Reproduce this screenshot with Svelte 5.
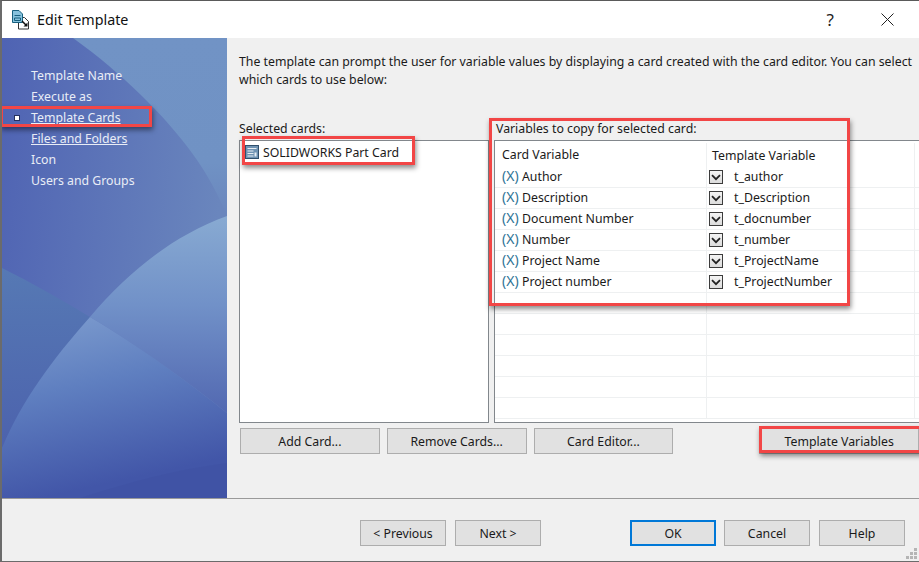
<script lang="ts">
  const nav = ['Template Name', 'Execute as', 'Template Cards', 'Files and Folders', 'Icon', 'Users and Groups'];
  const active = 'Template Cards';
  const linked = ['Template Cards', 'Files and Folders'];

  const vars = [
    { card: 'Author', tpl: 't_author' },
    { card: 'Description', tpl: 't_Description' },
    { card: 'Document Number', tpl: 't_docnumber' },
    { card: 'Number', tpl: 't_number' },
    { card: 'Project Name', tpl: 't_ProjectName' },
    { card: 'Project number', tpl: 't_ProjectNumber' }
  ];
  // empty rows under the list
  const blanks = [0, 1, 2, 3, 4, 5];
</script>

<div class="window">
  <header class="titlebar">
    <svg class="app-icon" width="20" height="20" viewBox="0 0 20 20">
      <path d="M6.500 7.500h6l4 4v7.500h-10z" fill="#fff" stroke="#333" />
      <path d="M.5 .5h6.500l3.500 3.500v8.500h-10z" fill="#86c1dc" stroke="#17607f" />
      <path d="M2.500 5.500h6M2.500 8h6v2.500h-6z" fill="none" stroke="#17607f" />
      <path d="M10 11l4.500 4.500" stroke="#111" stroke-width="1.500" />
      <path d="M15.500 12.500v4h-4z" fill="#111" />
    </svg>
    <span class="title">Edit Template</span>
    <span class="help-q">?</span>
    <svg class="close" width="13" height="13" viewBox="0 0 13 13">
      <path d="M.5.5l12 12M12.500.5l-12 12" stroke="#222" fill="none" />
    </svg>
  </header>

  <div class="body">
    <aside class="sidebar">
      <svg class="art" width="225" height="460" viewBox="0 0 225 460">
        <defs>
          <linearGradient id="base" x1="0" y1="0" x2="1" y2="0.2">
            <stop offset="0" stop-color="#4f63b3" />
            <stop offset="1" stop-color="#6a86bd" />
          </linearGradient>
          <linearGradient id="corner" x1="0" y1="0" x2="0" y2="1">
            <stop offset="0" stop-color="#7193c5" />
            <stop offset="0.7" stop-color="#7092c4" />
            <stop offset="1" stop-color="#6a86bd" />
          </linearGradient>
          <linearGradient id="upper" x1="0" y1="178" x2="0" y2="375" gradientUnits="userSpaceOnUse">
            <stop offset="0" stop-color="#88aad2" />
            <stop offset="0.45" stop-color="#7191c8" />
            <stop offset="1" stop-color="#5268b1" />
          </linearGradient>
          <linearGradient id="lower" x1="0" y1="279" x2="40" y2="460" gradientUnits="userSpaceOnUse">
            <stop offset="0" stop-color="#7f9ecf" />
            <stop offset="0.45" stop-color="#5f7fc0" />
            <stop offset="1" stop-color="#4256a8" />
          </linearGradient>
          <linearGradient id="band" x1="0" y1="230" x2="0" y2="410" gradientUnits="userSpaceOnUse">
            <stop offset="0" stop-color="#5679b4" />
            <stop offset="1" stop-color="#4c62ad" />
          </linearGradient>
        </defs>
        <rect width="225" height="460" fill="url(#base)" />
        <path d="M71 0C120 35 165 80 190 115C205 135 218 160 225 178V0z" fill="url(#corner)" />
        <path d="M0 230C30 245 60 262 88 279L0 410z" fill="url(#band)" />
        <path d="M88 279C135 307 185 343 225 375V178C170 198 125 235 88 279z" fill="url(#upper)" />
        <path d="M0 410C20 362 50 322 88 279C135 307 185 343 225 375V460H0z" fill="url(#lower)" />
        <path d="M78 460C125 445 170 432 225 425V460z" fill="#3f4f9f" opacity="0.4" />
      </svg>
      <nav class="steps">
        {#each nav as item}
          <div class="step" class:link={linked.includes(item)}>
            {#if item === active}<span class="bullet"></span>{/if}
            {item}
          </div>
        {/each}
      </nav>
    </aside>

    <main class="content">
      <p class="intro">The template can prompt the user for variable values by displaying a card created with the card editor. You can select<br />which cards to use below:</p>

      <div class="panes">
        <section class="pane-left">
          <div class="pane-label">Selected cards:</div>
          <div class="listbox">
            <div class="card-row">
              <svg width="14" height="14" viewBox="0 0 14 14">
                <rect x=".5" y=".5" width="13" height="13" fill="#6f93b3" stroke="#2f4f6c" />
                <path d="M2.500 3.500h9M2.500 6h6M2.500 8.500h6M2.500 11h6" stroke="#e6edf3" />
                <rect x="9.500" y="7.500" width="2" height="4" fill="#e6edf3" />
              </svg>
              <span>SOLIDWORKS Part Card</span>
            </div>
          </div>
        </section>

        <section class="pane-right">
          <div class="pane-label vars-label">Variables to copy for selected card:</div>
          <div class="listbox grid">
            <div class="head">
              <div class="col-a">Card Variable</div>
              <div class="col-b">Template Variable</div>
            </div>
            {#each vars as v}
              <div class="row">
                <div class="col-a"><span class="x-mark">(X)</span>{v.card}</div>
                <div class="col-b">
                  <span class="dropbox">
                    <svg width="10" height="7" viewBox="0 0 10 7"><path d="M1 1.200l4 4 4-4" fill="none" stroke="#222" stroke-width="1.800" /></svg>
                  </span>
                  <span class="tpl">{v.tpl}</span>
                </div>
              </div>
            {/each}
            {#each blanks as b (b)}
              <div class="row"><div class="col-a"></div><div class="col-b"></div></div>
            {/each}
          </div>
        </section>
      </div>

      <div class="actions">
        <button>Add Card...</button>
        <button>Remove Cards...</button>
        <button>Card Editor...</button>
        <button class="tpl-vars">Template Variables</button>
      </div>
    </main>
  </div>

  <footer class="footer">
    <button>&lt; Previous</button>
    <button class="next">Next &gt;</button>
    <button class="ok">OK</button>
    <button class="cancel">Cancel</button>
    <button class="help">Help</button>
    <svg class="grip" width="11" height="11" viewBox="0 0 11 11" fill="#b5b5b5">
      <rect x="8" y="0" width="3" height="3" /><rect x="4" y="4" width="3" height="3" /><rect x="8" y="4" width="3" height="3" />
      <rect x="0" y="8" width="3" height="3" /><rect x="4" y="8" width="3" height="3" /><rect x="8" y="8" width="3" height="3" />
    </svg>
  </footer>

  <!-- red annotation boxes drawn on top of the dialog -->
  <div class="mark m-nav"></div>
  <div class="mark m-card"></div>
  <div class="mark m-vars"></div>
  <div class="mark m-btn"></div>
</div>

<style>
  :global(body) {
    margin: 0;
    background: #f0f0f0;
    overflow: hidden;
  }

  .window {
    position: relative;
    width: 919px;
    height: 562px;
    box-sizing: border-box;
    border-top: 1px solid #5a5a5a;
    border-left: 2px solid #6b6b6b;
    border-bottom: 1px solid #6b6b6b;
    background: #f0f0f0;
    font-family: "Noto Sans", "Liberation Sans", sans-serif;
    font-size: 12.3px;
    color: #1a1a1a;
    overflow: hidden;
    display: flex;
    flex-direction: column;
  }

  .titlebar {
    height: 37px;
    flex: none;
    background: #fff;
    display: flex;
    align-items: center;
    padding-left: 10px;
  }

  .app-icon {
    margin-right: 5px;
  }

  .title {
    font-size: 14.3px;
    color: #111;
  }

  .help-q {
    margin-left: auto;
    font-size: 17px;
    color: #222;
  }

  .close {
    margin-left: 47px;
    margin-right: 25px;
  }

  .body {
    flex: none;
    height: 460px;
    display: flex;
    border-bottom: 1px solid #9a9a9a;
  }

  .sidebar {
    position: relative;
    flex: none;
    width: 225px;
    height: 460px;
    overflow: hidden;
  }

  .art {
    position: absolute;
    left: 0;
    top: 0;
  }

  .steps {
    position: relative;
    padding: 27px 0 0 29px;
  }

  .step {
    position: relative;
    height: 21px;
    line-height: 21px;
    color: #e9edf6;
  }

  .step.link {
    text-decoration: underline;
  }

  .bullet {
    position: absolute;
    left: -17px;
    top: 8px;
    width: 4px;
    height: 4px;
    background: #fff;
    border: 1px solid #26315f;
  }

  .content {
    flex: 1;
    min-width: 0;
    padding: 15px 0 0 12px;
  }

  .intro {
    margin: 0;
    height: 48px;
    line-height: 18px;
    white-space: nowrap;
  }

  .panes {
    display: flex;
    gap: 5px;
    margin-top: 18px;
  }

  .pane-left {
    flex: none;
    width: 250px;
  }

  .pane-right {
    flex: none;
    width: 430px;
  }

  .pane-label {
    height: 21px;
    line-height: 20px;
  }

  .vars-label {
    padding-left: 2px;
  }

  .listbox {
    box-sizing: border-box;
    height: 283px;
    background: #fff;
    border: 1px solid #82878c;
    overflow: hidden;
  }

  .card-row {
    display: flex;
    align-items: center;
    gap: 4px;
    padding: 2px 0 0 5px;
    height: 18px;
  }

  .head,
  .row {
    display: flex;
    height: 21px;
  }

  .head {
    height: 26px;
    padding-top: 2px;
    box-sizing: border-box;
    align-items: center;
  }

  .row {
    box-sizing: border-box;
    border-bottom: 1px solid #eef0f1;
    line-height: 20px;
  }

  .col-a {
    flex: none;
    width: 212px;
    box-sizing: border-box;
    padding-left: 7px;
    border-right: 1px solid #eef0f1;
    white-space: nowrap;
  }

  .head .col-a {
    height: 100%;
    line-height: 23px;
  }

  .col-b {
    flex: none;
    width: 208px;
    box-sizing: border-box;
    display: flex;
    align-items: center;
    padding-left: 5px;
    border-right: 1px solid #eef0f1;
    white-space: nowrap;
  }

  .head .col-b {
    height: 100%;
  }

  .row .col-b {
    padding-left: 2px;
  }

  .x-mark {
    display: inline-block;
    width: 17px;
    margin-right: 3px;
    font-size: 14px;
    line-height: 18px;
    vertical-align: top;
    color: #2f7396;
  }

  .dropbox {
    box-sizing: border-box;
    width: 14px;
    height: 14px;
    flex: none;
    display: flex;
    align-items: center;
    justify-content: center;
    border: 1px solid #3c3c3c;
    background: linear-gradient(#f4f4f4, #dcdcdc);
  }

  .tpl {
    margin-left: 11px;
  }

  button {
    box-sizing: border-box;
    height: 26px;
    background: #e1e1e1;
    border: 1px solid #adadad;
    border-radius: 0;
    padding: 0;
    font: inherit;
    color: #1a1a1a;
  }

  .actions {
    display: flex;
    gap: 7px;
    margin-top: 5px;
    padding-left: 1px;
  }

  .actions button {
    width: 140px;
  }

  .actions .tpl-vars {
    margin-left: 79px;
    width: 160px;
  }

  .footer {
    position: relative;
    flex: 1;
    display: flex;
    align-items: flex-start;
    padding: 21px 0 0 358px;
  }

  .footer button {
    width: 86px;
  }

  .footer .next {
    margin-left: 9px;
  }

  .footer .ok {
    margin-left: 89px;
    border: 2px solid #0078d7;
  }

  .footer .cancel {
    margin-left: 8px;
  }

  .footer .help {
    margin-left: 9px;
  }

  .grip {
    position: absolute;
    right: 2px;
    bottom: 2px;
  }

  .mark {
    position: absolute;
    box-sizing: border-box;
    border: 3px solid #f24646;
    box-shadow: 1px 3px 5px rgba(0, 0, 0, 0.45);
  }

  .m-nav {
    left: -2px;
    top: 105px;
    width: 152px;
    height: 21px;
  }

  .m-card {
    left: 240px;
    top: 135px;
    width: 173px;
    height: 29px;
  }

  .m-vars {
    left: 487px;
    top: 117px;
    width: 361px;
    height: 188px;
  }

  .m-btn {
    left: 757px;
    top: 425px;
    width: 165px;
    height: 27px;
  }
</style>
